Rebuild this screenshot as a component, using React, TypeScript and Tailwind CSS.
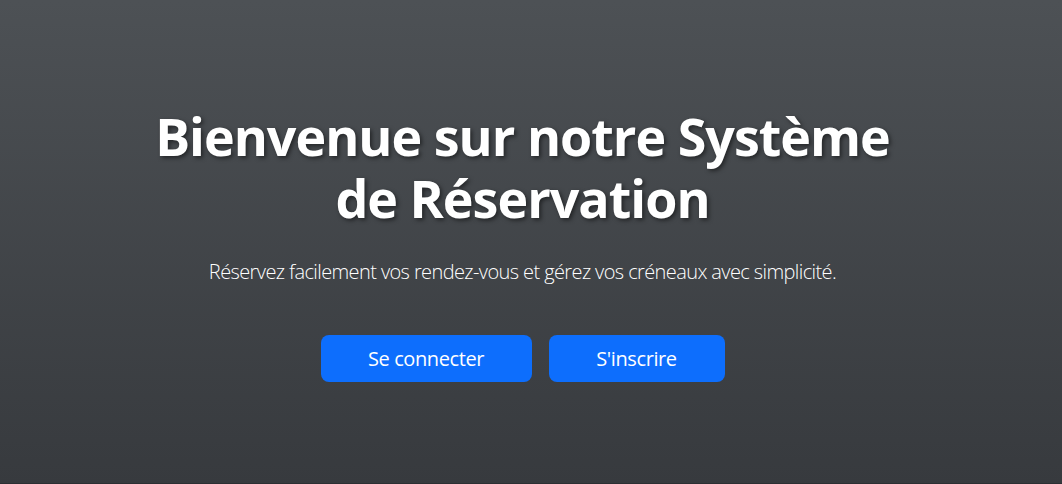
import React from "react";

export default function App() {
  return (
    <div className="h-[484px] w-full overflow-hidden flex flex-col bg-gradient-to-b from-[#4d5155] to-[#373a3e]" style={{ fontFamily: '"Open Sans", "Noto Sans", sans-serif' }}>
      <div className="flex-1 flex flex-col items-center justify-center pt-1 pr-[17px] text-center text-white">
        <h1 className="text-[52px] leading-[1.2] font-bold tracking-[-1px] max-w-[760px] [text-shadow:2px_2px_4px_rgba(0,0,0,0.5)] mb-2">
          Bienvenue sur notre Système de Réservation
        </h1>
        <p className="text-[20px] font-light leading-[1.5] tracking-[-0.6px] mt-5 mb-12">
          Réservez facilement vos rendez-vous et gérez vos créneaux avec simplicité.
        </p>
        <div className="flex gap-[17px]">
          <button className="h-[47px] w-[211px] rounded-lg bg-[#0d6efd] text-[20px] tracking-[-0.4px] text-white">Se connecter</button>
          <button className="h-[47px] w-[176px] rounded-lg bg-[#0d6efd] text-[20px] tracking-[-0.4px] text-white">S'inscrire</button>
        </div>
      </div>
      <div className="h-px bg-[#2c2f33]" />
    </div>
  );
}
